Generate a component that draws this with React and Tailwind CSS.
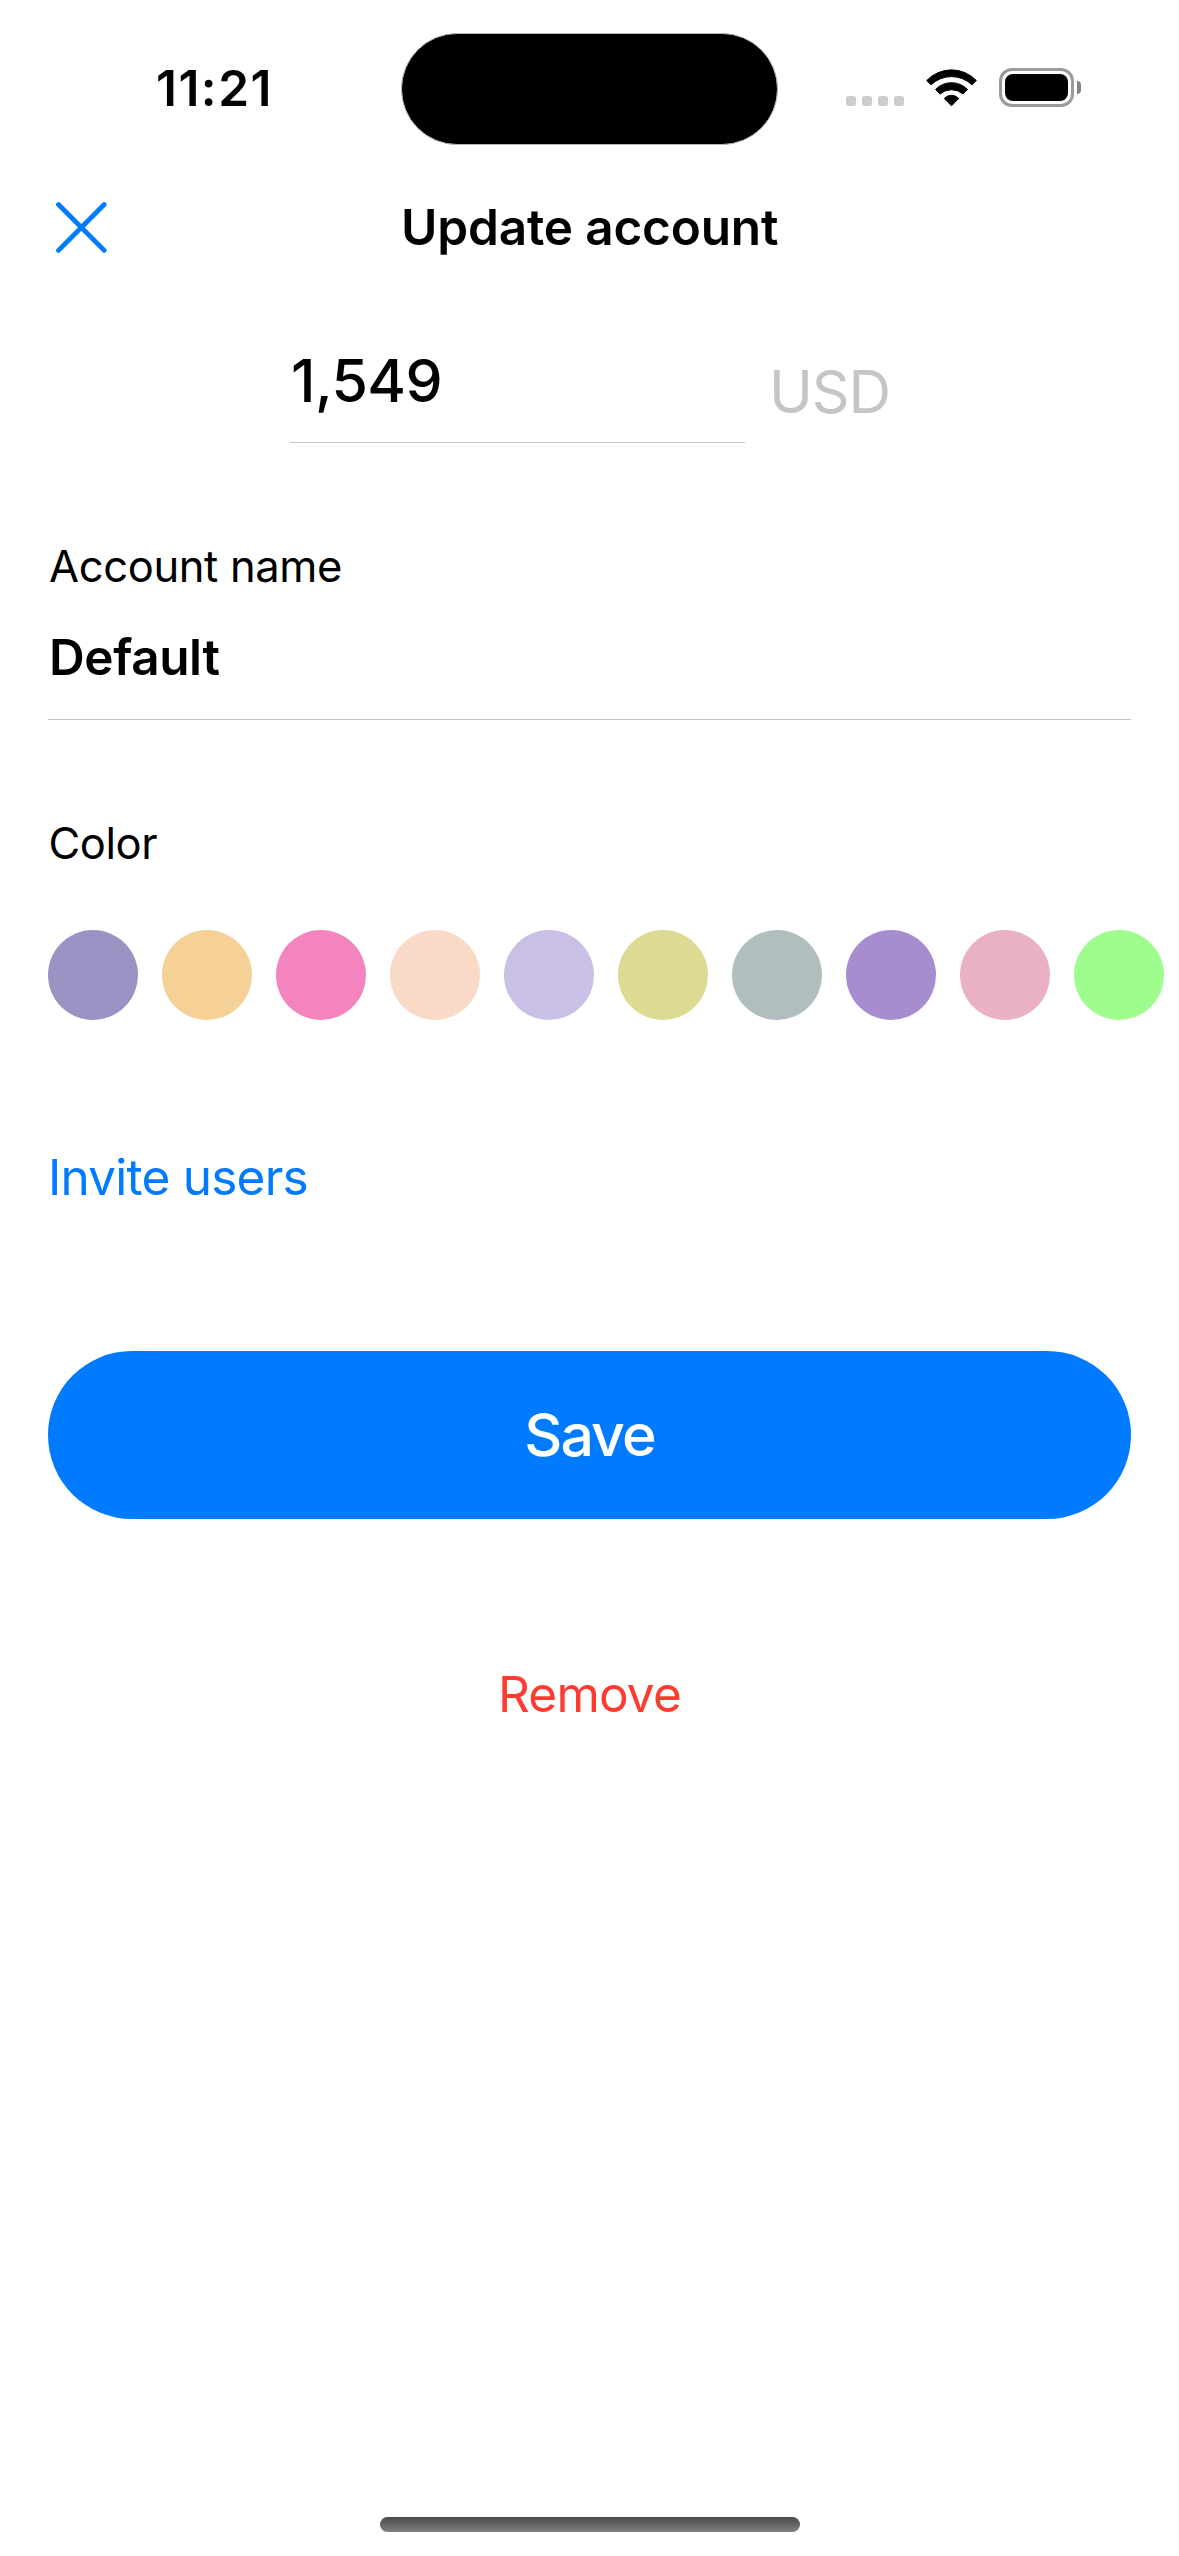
const COLORS = [
  "bg-[#9993c4]",
  "bg-[#f5d197]",
  "bg-[#f484be]",
  "bg-[#f9dac7]",
  "bg-[#cabfe4]",
  "bg-[#dcda93]",
  "bg-[#b1bebf]",
  "bg-[#a78dd0]",
  "bg-[#eab0c4]",
  "bg-[#9efd8d]",
];

function WifiIcon() {
  return (
    <svg className="h-[38px] w-[51px]" viewBox="0 0 153 114" fill="#000" stroke="#000" strokeWidth="3" strokeLinejoin="round">
      <path d="M2 34.5A103 103 0 0 1 151 34.5L138 47.500A89 89 0 0 0 15 47.500Z" />
      <path d="M28.500 61.500A66.500 66.500 0 0 1 124.500 61.500L111 75A53 53 0 0 0 42 75Z" />
      <path d="M55 88.500A29 29 0 0 1 98 88.500L76.500 110.500Z" />
    </svg>
  );
}

function CloseIcon() {
  return (
    <svg className="h-[52px] w-[52px]" viewBox="0 0 52 52" fill="none" stroke="#007aff" strokeWidth="4.8" strokeLinecap="round">
      <path d="M2.500 3.500L48.200 49.400M48.200 3.500L2.500 49.400" />
    </svg>
  );
}

function Battery() {
  return (
    <div className="flex items-center gap-[3px]">
      <div className="h-[39px] w-[75px] rounded-[13px] border-[3px] border-[#9a9a9a] p-[3px]">
        <div className="h-full w-full rounded-[8px] bg-black" />
      </div>
      <div className="h-[13px] w-1 rounded-r-full bg-[#858585]" />
    </div>
  );
}

function StatusBar() {
  return (
    <header className="flex h-[178px] items-center">
      <div className="w-[401px] pb-0.5 pl-[156px] text-[49.5px] leading-[60px] font-semibold tracking-[1.5px]">11:21</div>
      <div className="h-[112px] w-[377px] rounded-full border border-[#b8b8b8] bg-black" />
      <div className="flex flex-1 items-end gap-[22px] pb-[3px] pl-[68px]">
        <div className="mb-px flex gap-1.5">
          {[0, 1, 2, 3].map((dot) => (
            <div key={dot} className="size-[10px] rounded-[3px] bg-[#cccccc]" />
          ))}
        </div>
        <WifiIcon />
        <Battery />
      </div>
    </header>
  );
}

export default function App() {
  return (
    <div className="flex h-[2556px] w-[1179px] flex-col overflow-hidden bg-white font-[Inter,sans-serif] text-black">
      <StatusBar />

      <nav className="flex h-[98px] items-center pl-[56px]">
        <button className="mr-[293px]" aria-label="Close">
          <CloseIcon />
        </button>
        <h1 className="text-[49.5px] leading-[60px] font-semibold tracking-[-0.17px] whitespace-nowrap">Update account</h1>
      </nav>

      <main className="flex flex-col px-12">
        <div className="mt-[67px] flex h-[100px] pl-[242px]">
          <div className="h-[100px] w-[455px] border-b border-[#c6c6c8] pl-px text-[59px] leading-[75px] font-medium tracking-[-0.6px]">
            1,549
          </div>
          <div className="ml-6 text-[59px] leading-[98px] tracking-[-1.1px] text-[#c5c5c7]">USD</div>
        </div>

        <label className="mt-[97px] pl-px text-[43.5px] leading-[52px] tracking-[-0.35px]">Account name</label>
        <div className="mt-[35px] h-[93px] border-b border-[#c6c6c8] pl-px text-[49.5px] leading-[61px] font-semibold tracking-[-0.4px]">
          Default
        </div>

        <label className="mt-[97px] pl-[0.500px] text-[43.5px] leading-[52px] tracking-[-0.45px]">Color</label>
        <div className="mt-[61px] -mr-12 flex gap-6">
          {COLORS.map((color) => (
            <button key={color} className={`size-[90px] shrink-0 rounded-full ${color}`} aria-label="Color" />
          ))}
        </div>

        <a className="mt-[127px] text-[49.5px] leading-[60px] tracking-[-0.77px] text-[#007aff]">Invite users</a>

        <button className="mt-[144px] h-[168px] rounded-full bg-[#007aff] text-[59px] leading-[72px] font-medium tracking-[-1.9px] text-white">
          Save
        </button>
        <button className="mt-[145px] text-[49.5px] leading-[60px] tracking-[-0.8px] text-[#ff3b30]">Remove</button>
      </main>

      <div className="mt-auto mb-6 h-[15px] w-[420px] self-center rounded-full bg-linear-to-b from-[#4a4a4a] to-[#808080]" />
    </div>
  );
}
